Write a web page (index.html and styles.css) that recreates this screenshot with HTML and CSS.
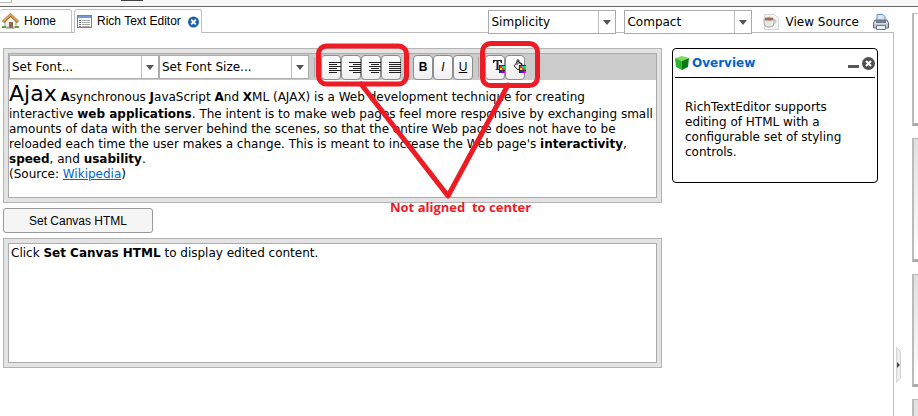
FILE: index.html
```
<!DOCTYPE html>
<html lang="en">

<head>
  <meta charset="UTF-8">
  <title>Rich Text Editor</title>
  <link rel="stylesheet" href="styles.css">
</head>

<body>
  <div class="top-strip">
    <span class="strip-tab"></span>
    <span class="strip-handle"></span>
  </div>

  <div class="page">
    <div class="workspace">
      <div class="tab-bar">
        <nav class="tabs">
          <a class="tab tab-home" href="#home">
            <svg width="17" height="16" viewBox="0 0 17 16">
              <path d="M3 8v6h11V8L8.500 3z" fill="#f4f1ea" stroke="#a9a296"/>
              <path d="M1 9l7.500-7L16 9" fill="none" stroke="#8d5a22" stroke-width="3"/>
              <path d="M1 8.500l7.500-7L16 8.500" fill="none" stroke="#e0a050" stroke-width="2"/>
              <path d="M7 9h4v6H7z" fill="#8a6a50"/>
              <path d="M0 13h4v2H0zM13 13h4v2h-4z" fill="#5fa344"/>
              <path d="M4 15h9" stroke="#888"/>
            </svg>
            Home
          </a>
          <a class="tab tab-active" href="#editor">
            <svg width="15" height="14" viewBox="0 0 15 14">
              <rect x="0.500" y="0.500" width="14" height="12" fill="#fff" stroke="#5b86c4"/>
              <path d="M1 1h13v2H1z" fill="#6f9bdb"/>
              <path d="M5 5.500h8M5 7.500h8M5 9.500h8M5 11.500h8" stroke="#aaa"/>
              <path d="M2 5.500h2M2 7.500h2M2 9.500h2M2 11.500h2" stroke="#777"/>
            </svg>
            Rich Text Editor
            <svg class="tab-close" width="11" height="12" viewBox="0 0 12 12">
              <circle cx="6" cy="6" r="6" fill="#1c62a8"/>
              <path d="M3.500 3.500l5 5M8.500 3.500l-5 5" stroke="#fff" stroke-width="2"/>
            </svg>
          </a>
        </nav>
        <div class="tab-tools">
          <select class="select" aria-label="Skin">
            <option>Simplicity</option>
          </select>
          <select class="select" aria-label="Density">
            <option>Compact</option>
          </select>
          <button class="tool-link">
            <svg width="16" height="16" viewBox="0 0 16 16">
              <path d="M1.500 0.500h10l4 4v11h-14z" fill="#f5f5f5" stroke="#d5d5d5"/>
              <path d="M1 5h10v4q0 4-4 4H5q-4 0-4-4z" fill="#e8e8e8" stroke="#aaa"/>
              <ellipse cx="6" cy="5" rx="5" ry="2" fill="#a5694f" stroke="#ccc"/>
              <path d="M11 6q3 0 2 2t-3 2" fill="none" stroke="#bbb"/>
            </svg>
            View Source
          </button>
          <button class="tool-link" aria-label="Print">
            <svg width="16" height="16" viewBox="0 0 16 16">
              <path d="M4 7V0.500h6l2 2V7" fill="#d5e8fc" stroke="#5c8fcb"/>
              <path d="M2 6h12l1.500 3v5h-15V9z" fill="#c3c6cc" stroke="#626770"/>
              <path d="M1 9h14" stroke="#eee"/>
              <path d="M3 6h10v3H3z" fill="#777d87"/>
              <path d="M3.500 11.500h9v4h-9z" fill="#e4f0fc" stroke="#5a7ba5"/>
            </svg>
          </button>
        </div>
      </div>

      <div class="content">
        <div class="editor-column">
          <div class="frame">
            <div class="frame-inner editor">
              <div class="toolbar">
                <select class="select font-select" aria-label="Font">
                  <option>Set Font...</option>
                </select>
                <select class="select font-select" aria-label="Font size">
                  <option>Set Font Size...</option>
                </select>
                <span class="separator"></span>
                <div class="button-group">
                  <button class="tool-button icon-button" aria-label="Align left">
                    <svg width="13" height="16" viewBox="0 0 13 16">
                      <path d="M0 3.500h12M0 5.500h8M0 7.500h12M0 9.500h8M0 11.500h12M0 13.500h8" stroke="#222"/>
                    </svg>
                  </button>
                  <button class="tool-button icon-button" aria-label="Align center">
                    <svg width="13" height="16" viewBox="0 0 13 16">
                      <path d="M0 3.500h12M4 5.500h8M0 7.500h12M4 9.500h8M0 11.500h12M4 13.500h8" stroke="#222"/>
                    </svg>
                  </button>
                  <button class="tool-button icon-button" aria-label="Align right">
                    <svg width="13" height="16" viewBox="0 0 13 16">
                      <path d="M0 3.500h12M2 5.500h8M0 7.500h12M2 9.500h8M0 11.500h12M2 13.500h8" stroke="#222"/>
                    </svg>
                  </button>
                  <button class="tool-button icon-button" aria-label="Justify">
                    <svg width="13" height="16" viewBox="0 0 13 16">
                      <path d="M0 3.500h12M0 5.500h12M0 7.500h12M0 9.500h12M0 11.500h12M0 13.500h12" stroke="#222"/>
                    </svg>
                  </button>
                </div>
                <div class="button-group">
                  <button class="tool-button"><b>B</b></button>
                  <button class="tool-button"><i>I</i></button>
                  <button class="tool-button"><u>U</u></button>
                </div>
                <span class="separator"></span>
                <div class="button-group">
                  <button class="tool-button icon-button" aria-label="Text color">
                    <svg width="13" height="16" viewBox="0 0 13 16">
                      <path d="M0 4V1h9v3H8L7 2H5.500v8l1.500 1H2l1.500-1V2H2L1 4z" fill="#222"/>
                      <path d="M6 6h7v8H6z" fill="#333"/>
                      <path d="M7 7h2v2H7z" fill="#f22"/>
                      <path d="M9 7h2v2H9z" fill="#1cd"/>
                      <path d="M11 7h2v2h-2z" fill="#0e6"/>
                      <path d="M7 9h2v2H7z" fill="#fd0"/>
                      <path d="M9 9h2v2H9z" fill="#f33"/>
                      <path d="M11 9h2v2h-2z" fill="#4a4"/>
                      <path d="M7 12h2v2H7z" fill="#22e"/>
                      <path d="M9 12h2v2H9z" fill="#80f"/>
                      <path d="M11 12h2v2h-2z" fill="#f0e"/>
                    </svg>
                  </button>
                  <button class="tool-button icon-button" aria-label="Background color">
                    <svg width="13" height="16" viewBox="0 0 13 16">
                      <path d="M5 2L1 7l4 4 4-5zM4 6V1h2v4" fill="#eee" stroke="#333"/>
                      <path d="M7 3q3 1 3 5L8 6z" fill="#222"/>
                      <path d="M6 6h7v8H6z" fill="#333"/>
                      <path d="M7 7h2v2H7z" fill="#f22"/>
                      <path d="M9 7h2v2H9z" fill="#1cd"/>
                      <path d="M11 7h2v2h-2z" fill="#0e6"/>
                      <path d="M7 9h2v2H7z" fill="#fd0"/>
                      <path d="M9 9h2v2H9z" fill="#f33"/>
                      <path d="M11 9h2v2h-2z" fill="#4a4"/>
                      <path d="M7 12h2v2H7z" fill="#22e"/>
                      <path d="M9 12h2v2H9z" fill="#80f"/>
                      <path d="M11 12h2v2h-2z" fill="#f0e"/>
                    </svg>
                  </button>
                </div>
              </div>
              <div class="editor-text">
                <span class="big">Ajax</span> <b>A</b>synchronous <b>J</b>avaScript <b>A</b>nd <b>X</b>ML (AJAX) is a Web development technique for creating<br>
                interactive <b>web applications</b>. The intent is to make web pages feel more responsive by exchanging small<br>
                amounts of data with the server behind the scenes, so that the entire Web page does not have to be<br>
                reloaded each time the user makes a change. This is meant to increase the Web page's <b>interactivity</b>,<br>
                <b>speed</b>, and <b>usability</b>.<br>
                (Source: <a href="#wikipedia">Wikipedia</a>)
              </div>
            </div>
          </div>

          <button class="set-button">Set Canvas HTML</button>

          <div class="frame">
            <div class="frame-inner output">
              Click <b>Set Canvas HTML</b> to display edited content.
            </div>
          </div>
        </div>

        <section class="overview">
          <div class="overview-header">
            <svg width="14" height="14" viewBox="0 0 14 14">
              <path d="M0 2l7-2 7 2-7 3z" fill="#7ddc5a"/>
              <path d="M0 2l7 3v9l-6-3z" fill="#2eb42a"/>
              <path d="M14 2L7 5v9l6-3z" fill="#0b7a14"/>
            </svg>
            <h2>Overview</h2>
            <button class="header-button" aria-label="Minimize">
              <svg width="11" height="12" viewBox="0 0 11 12">
                <path d="M0 8h11v3H0z" fill="#555"/>
              </svg>
            </button>
            <button class="header-button" aria-label="Close">
              <svg width="13" height="13" viewBox="0 0 13 13">
                <circle cx="6.500" cy="6.500" r="6.500" fill="#505050"/>
                <path d="M4 4l5 5M9 4l-5 5" stroke="#fff" stroke-width="2"/>
              </svg>
            </button>
          </div>
          <p>RichTextEditor supports editing of HTML with a configurable set of styling controls.</p>
        </section>
      </div>
    </div>

    <div class="splitter">
      <svg width="6" height="36" viewBox="0 0 6 36">
        <path d="M0.500 0.500l4 4v27l-4 4z" fill="#eee" stroke="#d5d5d5"/>
        <path d="M1 15l3 3-3 3z" fill="#444"/>
      </svg>
    </div>

    <div class="side">
      <div class="card card-white"></div>
      <div class="card"></div>
      <div class="card"></div>
      <div class="card"></div>
    </div>
  </div>

  <!-- review note drawn over the editor -->
  <div class="note">
    <svg width="230" height="162" viewBox="0 0 230 162">
      <g fill="none" stroke="#ed1c24" stroke-width="5" stroke-linejoin="round" stroke-linecap="round">
        <rect x="4.500" y="8" width="88" height="38" rx="8"/>
        <rect x="168.500" y="5.500" width="55" height="42" rx="8"/>
        <path d="M47 46l87 112 60-111"/>
      </g>
    </svg>
    <div class="note-text">Not aligned&nbsp; to center</div>
  </div>
</body>

</html>
```
FILE: styles.css
```
* {
  box-sizing: border-box;
}

body {
  margin: 0;
  height: 100vh;
  display: flex;
  flex-direction: column;
  overflow: hidden;
  font-family: Verdana, "DejaVu Sans", sans-serif;
  font-size: 12px;
  line-height: 15px;
  color: #000;
  background-color: #fff;
}

svg {
  display: block;
  flex: none;
}

button {
  font-family: inherit;
  font-size: 12px;
  color: #000;
  cursor: pointer;
}

.top-strip {
  display: flex;
  gap: 109px;
  flex: none;
  height: 7px;
  background-color: #f7f7f7;
  border-bottom: 1px solid #666;
}

.strip-tab {
  width: 12px;
  height: 3px;
  background-color: #fff;
  border: 1px solid #bbb;
  border-width: 0 1px 1px 0;
}

.strip-handle {
  width: 22px;
  height: 1px;
  background-color: #444;
}

.page {
  display: flex;
  flex: 1;
  min-height: 0;
}

.workspace {
  flex: 1;
  min-width: 0;
  display: flex;
  flex-direction: column;
}

.tab-bar {
  display: flex;
  justify-content: space-between;
  align-items: flex-start;
  height: 26px;
  padding-top: 2px;
  border-bottom: 1px solid #bbb;
}

.tabs {
  display: flex;
  align-items: flex-start;
  gap: 2px;
}

.tab {
  display: flex;
  align-items: center;
  gap: 5px;
  height: 23px;
  border: 1px solid #c0c3c7;
  border-bottom: none;
  border-radius: 3px 3px 0 0;
  font-family: Arial, "Liberation Sans", sans-serif;
  color: #000;
  text-decoration: none;
}

.tab-home {
  padding: 0 15px 0 2px;
  border-left: none;
}

.tab-active {
  height: 24px;
  padding: 0 2px;
  background-color: #fff;
}

.tab-close {
  margin-left: 2px;
}

.tab-tools {
  display: flex;
  align-items: center;
  gap: 8px;
  padding: 1px 2px 0 0;
}

.select {
  appearance: none;
  width: 128px;
  height: 24px;
  padding: 0 18px 0 2px;
  border: 1px solid #ababab;
  border-radius: 0;
  font-family: inherit;
  font-size: 12px;
  color: #000;
  background: url("data:image/svg+xml,%3Csvg xmlns='http://www.w3.org/2000/svg' width='17' height='24'%3E%3Cpath d='M.5 0v24' stroke='%23bbb'/%3E%3Cpath d='M5 10h8l-4 5z' fill='%23555'/%3E%3C/svg%3E") right center no-repeat #fff;
}

.tool-link {
  display: flex;
  align-items: center;
  gap: 6px;
  padding: 0 3px;
  border: none;
  background: none;
}

.content {
  display: flex;
  align-items: flex-start;
  gap: 10px;
  flex: 1;
  padding: 15px 15px 0 3px;
  border-right: 1px solid #bbb;
}

.editor-column {
  flex: 1;
  min-width: 0;
}

.frame {
  padding: 4px;
  border: 1px solid #b3b3b3;
  background-color: #e3e3e3;
}

.frame-inner {
  border: 1px solid #ababab;
  background-color: #fff;
}

.editor {
  min-height: 145px;
}

.toolbar {
  display: flex;
  align-items: center;
  height: 26px;
  background-color: #cbcbcb;
}

.font-select {
  width: 150px;
}

.separator {
  width: 1px;
  height: 20px;
  margin: 0 6px 0 5px;
  background-color: #aaa;
}

.button-group {
  display: flex;
}

.button-group + .button-group {
  margin-left: 12px;
}

.tool-button {
  width: 20px;
  height: 25px;
  padding: 0;
  border: 1px solid #8c8c8c;
  border-radius: 4px;
  font-family: Arial, "Liberation Sans", sans-serif;
  background: linear-gradient(#fff, #f0f0f0);
}

.icon-button {
  padding-left: 7px;
}

.editor-text {
  white-space: nowrap;
}

.editor-text a {
  color: #0066cc;
}

.big {
  font-size: 22px;
  line-height: 27px;
}

.set-button {
  display: block;
  width: 150px;
  height: 25px;
  margin: 5px 0;
  border: 1px solid #999;
  border-radius: 3px;
  font-family: Arial, "Liberation Sans", sans-serif;
  background-color: #f5f5f5;
}

.output {
  min-height: 120px;
  padding: 2px;
}

.overview {
  width: 206px;
  min-height: 135px;
  padding: 0 2px;
  border: 1px solid #000;
  border-radius: 4px;
}

.overview-header {
  display: flex;
  align-items: center;
  gap: 3px;
  height: 29px;
  border-bottom: 1px solid #000;
}

.overview-header h2 {
  flex: 1;
  margin: 0;
  font-size: 12px;
  color: #0066cc;
}

.header-button {
  padding: 0;
  border: none;
  background: none;
}

.overview p {
  margin: 0;
  padding: 22px 24px 0 10px;
}

.splitter {
  display: flex;
  align-items: center;
  width: 18px;
  padding: 306px 0 0 2px;
}

.side {
  display: flex;
  flex-direction: column;
  gap: 12px;
  width: 6px;
  padding-top: 6px;
  overflow: hidden;
}

.card {
  flex: none;
  height: 113px;
  border-top: 1px solid #bbb;
  border-left: 2px solid #bbb;
  border-bottom: 3px solid #aaa;
  background: linear-gradient(#e0e0e0, #fff);
}

.card:nth-child(2) {
  height: 124px;
}

.card-white {
  background: #fff;
}

.note {
  position: absolute;
  top: 38px;
  left: 314px;
  width: 268px;
  pointer-events: none;
}

.note-text {
  padding-left: 76px;
  font-family: "Segoe UI", "Open Sans", sans-serif;
  font-size: 13px;
  font-weight: bold;
  white-space: nowrap;
  color: #ed1c24;
}
```
